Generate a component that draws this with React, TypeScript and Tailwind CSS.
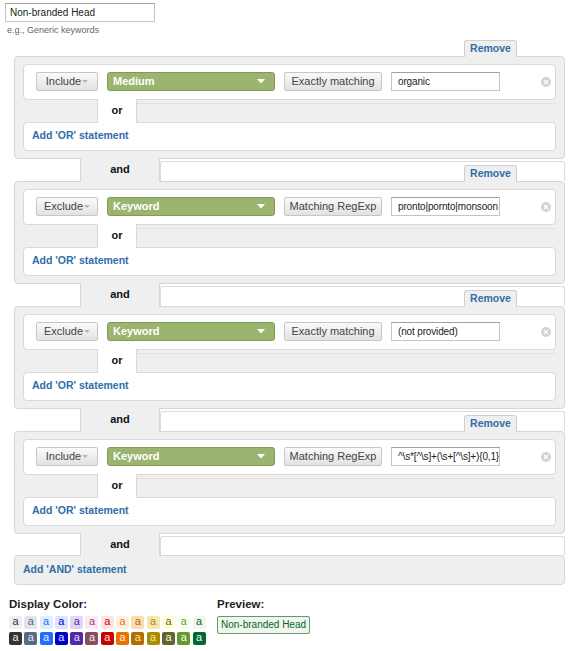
import React from "react";

type RuleProps = {
  mode: string;
  dim: string;
  match: string;
  value: string;
  first?: boolean;
};

const swatches = [
  ["#eeeeee", "#333333"],
  ["#dfe4ee", "#5a6986"],
  ["#e0ecff", "#206cff"],
  ["#dfe2ff", "#0000cc"],
  ["#e0d5f9", "#5229a3"],
  ["#fde9f4", "#854f61"],
  ["#ffe3e3", "#cc0000"],
  ["#fff0e1", "#ec7000"],
  ["#fadcb3", "#b36d00"],
  ["#f3e7b3", "#ab8b00"],
  ["#ffffd4", "#636330"],
  ["#f9ffef", "#64992c"],
  ["#f1f5ec", "#006633"],
];

function RemoveTab() {
  return (
    <div className="relative z-10 -mb-px flex h-[17px] w-[53px] items-center justify-center rounded-t-[3px] border border-b-0 border-[#cfcfcf] bg-[#efefef] text-[10.5px] font-bold text-[#2f6ea7]">
      Remove
    </div>
  );
}

function GrayButton({ label, arrow, width }: { label: string; arrow?: boolean; width: string }) {
  return (
    <div
      className={`flex h-[19px] ${width} items-center justify-center rounded-[2px] border border-[#c6c6c6] bg-linear-to-b from-[#fafafa] to-[#e2e2e2] text-[11px] text-[#444]`}
    >
      {label}
      {arrow && (
        <svg width="6" height="4" viewBox="0 0 6 4" className="ml-[1px] mt-[1px]">
          <path d="M0 0h6L3 3z" fill="#b5b5b5" />
        </svg>
      )}
    </div>
  );
}

function Rule({ mode, dim, match, value, first }: RuleProps) {
  return (
    <div className="flex flex-col">
      {first ? (
        <div className="flex h-[16px] items-end justify-end pr-[48px]">
          <RemoveTab />
        </div>
      ) : (
        <div className="flex h-[22px]">
          <div className="w-[66px]" />
          <div className="relative z-10 -my-px flex w-[80px] items-center justify-center border-x border-[#d6d6d6] bg-[#efefef] text-[11px] font-bold text-[#111]">
            and
          </div>
          <div className="mt-[2px] flex flex-1 items-end justify-end rounded-t-[3px] border-x border-t border-[#dcdcdc] pr-[47px]">
            <RemoveTab />
          </div>
        </div>
      )}
      <div className="rounded-[4px] border border-[#d6d6d6] bg-[#efefef] px-[8px] py-[7px]">
        <div className="flex h-[36px] items-center rounded-[4px] border border-[#d9d9d9] bg-white pl-[12px] pr-[4px]">
          <GrayButton label={mode} arrow width="w-[62px]" />
          <div className="ml-[9px] flex h-[19px] w-[168px] items-center rounded-[3px] border border-[#7f9b57] bg-[#9bb46f] pl-[5px] pr-[9px] text-[11px] font-bold text-white">
            <span className="flex-1">{dim}</span>
            <svg width="8" height="5" viewBox="0 0 8 5">
              <path d="M0 0h8L4 4.5z" fill="#ffffff" />
            </svg>
          </div>
          <div className="ml-[9px]">
            <GrayButton label={match} width="w-[98px]" />
          </div>
          <div className="ml-[9px] flex h-[19px] w-[109px] items-center overflow-hidden whitespace-nowrap border border-[#c4c4c4] border-t-[#a0a0a0] bg-white pl-[6px] text-[10px] tracking-[-0.15px] text-[#222]">
            {value}
          </div>
          <div className="ml-auto flex h-[10px] w-[10px] items-center justify-center rounded-full bg-[#d2d2d2]">
            <svg width="6" height="6" viewBox="0 0 6 6">
              <path d="M1 1l4 4M5 1L1 5" stroke="#ffffff" strokeWidth="1.3" />
            </svg>
          </div>
        </div>
        <div className="flex h-[22px]">
          <div className="w-[74px]" />
          <div className="relative z-10 -my-px flex w-[40px] items-center justify-center border-x border-[#d9d9d9] bg-white text-[11px] font-bold text-[#111]">
            or
          </div>
          <div className="mt-[3px] flex-1 border-t border-[#e2e2e2]" />
        </div>
        <div className="flex h-[29px] items-center rounded-[4px] border border-[#d9d9d9] bg-white pl-[8px] text-[10.5px] font-bold text-[#2f6ea7]">
          Add 'OR' statement
        </div>
      </div>
    </div>
  );
}

export default function App() {
  return (
    <div className="min-h-[651px] w-[568px] bg-white pl-[5px] pt-[3px] font-['Liberation_Sans',Arial,sans-serif]">
      <div className="flex h-[19px] w-[150px] items-center border border-[#c4c4c4] border-t-[#a0a0a0] pl-[4px] text-[10px] text-[#222]">
        Non-branded Head
      </div>
      <div className="mt-[2px] pl-[2px] text-[9px] text-[#666]">e.g., Generic keywords</div>

      <div className="ml-[9px] mt-[2px] w-[551px]">
        <Rule first mode="Include" dim="Medium" match="Exactly matching" value="organic" />
        <Rule mode="Exclude" dim="Keyword" match="Matching RegExp" value="pronto|pornto|monsoon" />
        <Rule mode="Exclude" dim="Keyword" match="Exactly matching" value="(not provided)" />
        <Rule mode="Include" dim="Keyword" match="Matching RegExp" value="^\s*[^\s]+(\s+[^\s]+){0,1}$" />

        <div className="flex h-[21px]">
          <div className="w-[66px]" />
          <div className="relative z-10 -my-px flex w-[80px] items-center justify-center border-x border-[#d6d6d6] bg-[#efefef] text-[11px] font-bold text-[#111]">
            and
          </div>
          <div className="mt-[2px] flex-1 rounded-t-[3px] border-x border-t border-[#dcdcdc]" />
        </div>
        <div className="flex h-[30px] items-center rounded-[4px] border border-[#d6d6d6] bg-[#efefef] pl-[8px] text-[10.5px] font-bold text-[#2f6ea7]">
          Add 'AND' statement
        </div>
      </div>

      <div className="ml-[4px] mt-[11px] flex">
        <div className="w-[208px]">
          <div className="text-[11.5px] font-bold text-[#222]">Display Color:</div>
          <div className="mt-[3px] flex gap-[2.3px]">
            {swatches.map(([light, dark]) => (
              <div
                key={light}
                className="flex h-[13px] w-[13px] items-center justify-center rounded-[2px] pb-[2px] text-[11px]"
                style={{ backgroundColor: light, color: dark }}
              >
                a
              </div>
            ))}
          </div>
          <div className="mt-[3px] flex gap-[2.3px]">
            {swatches.map(([light, dark]) => (
              <div
                key={dark}
                className="flex h-[13px] w-[13px] items-center justify-center rounded-[2px] pb-[2px] text-[11px]"
                style={{ backgroundColor: dark, color: light }}
              >
                a
              </div>
            ))}
          </div>
        </div>
        <div>
          <div className="text-[11.5px] font-bold text-[#222]">Preview:</div>
          <div className="mt-[3px] flex h-[18px] items-center rounded-[2px] border border-[#5f9c6c] bg-[#f1f5ec] px-[3px] text-[10px] text-[#006633]">
            Non-branded Head
          </div>
        </div>
      </div>
    </div>
  );
}
